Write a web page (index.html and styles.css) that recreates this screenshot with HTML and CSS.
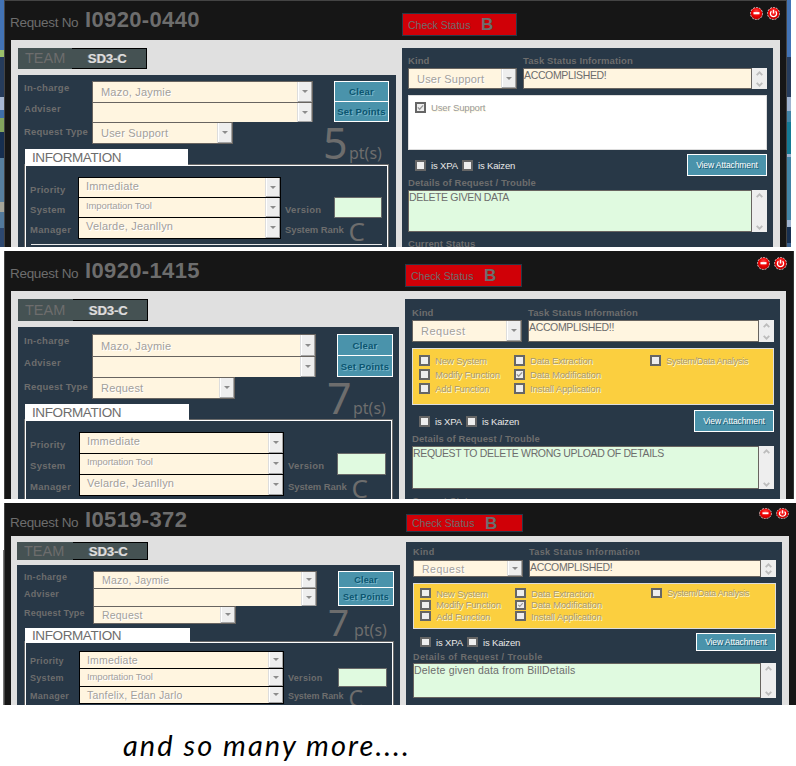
FILE: index.html
```html
<!DOCTYPE html>
<html lang="en">
<head>
<meta charset="utf-8">
<title>Request records</title>
<link rel="stylesheet" href="styles.css">
</head>
<body>
<svg class="defs" width="0" height="0" aria-hidden="true">
  <defs>
    <radialGradient id="orb" cx="50%" cy="35%" r="65%"><stop offset="0" stop-color="#ff4a4a"/><stop offset=".55" stop-color="#f00000"/><stop offset="1" stop-color="#b00000"/></radialGradient>
    <symbol id="minimize" viewBox="0 0 13 13" preserveAspectRatio="none"><circle cx="6.5" cy="6.5" r="6" fill="url(#orb)" stroke="#d8c8c8" stroke-width="1" stroke-dasharray="2 1"/><path d="M3.5 6.2h6" stroke="#fff" stroke-width="2.2"/></symbol>
    <symbol id="power" viewBox="0 0 13 13" preserveAspectRatio="none"><circle cx="6.5" cy="6.5" r="6" fill="url(#orb)" stroke="#d8c8c8" stroke-width="1" stroke-dasharray="2 1"/><path d="M4.4 4.3a3.1 3.1 0 1 0 4.2 0M6.5 2.8v3.8" stroke="#fff" stroke-width="1.3" fill="none"/></symbol>
    <symbol id="scroll-up" viewBox="0 0 7 5"><path d="M.7 4.2 3.5 1.3l2.8 2.9" stroke="#bdbdbd" stroke-width="1.8" fill="none"/></symbol>
    <symbol id="scroll-down" viewBox="0 0 7 5"><path d="M.7.8l2.8 2.9L6.3.8" stroke="#bdbdbd" stroke-width="1.8" fill="none"/></symbol>
    <symbol id="tick" viewBox="0 0 8 8"><path d="M1 3.8 3 6 7 1.5" stroke="#969696" stroke-width="1.5" fill="none"/></symbol>
  </defs>
</svg>

<section class="shot shot-a">
  <div class="edge edge-left"></div>
  <div class="window">
    <header class="head">
      <div class="request"><span class="request-label">Request No</span><span class="request-id">I0920-0440</span></div>
      <div class="status"><span>Check Status</span><b>B</b></div>
      <div class="orbs"><svg><use href="#minimize"/></svg><svg><use href="#power"/></svg></div>
    </header>
    <main class="body">
      <div class="left">
        <div class="team"><span class="team-label">TEAM</span><span class="team-name">SD3-C</span></div>
        <div class="panel">
          <div class="top">
            <div class="main-col">
              <div class="fields">
                <label>In-charge</label><div class="field"><span>Mazo, Jaymie</span><i class="drop"></i></div>
                <label>Adviser</label><div class="field"><span></span><i class="drop"></i></div>
                <label class="mid">Request Type</label><div class="field short"><span>User Support</span><i class="drop"></i></div>
              </div>
              <div class="tab">INFORMATION</div>
            </div>
            <div class="side">
              <div class="buttons"><button>Clear</button><button>Set Points</button></div>
              <div class="points"><span class="num">5</span><span class="unit">pt(s)</span></div>
            </div>
          </div>
          <div class="info">
            <div class="info-grid">
              <label>Priority</label><div class="field"><span>Immediate</span><i class="drop"></i></div><span></span><span></span>
              <label>System</label><div class="field"><span class="small">Importation Tool</span><i class="drop"></i></div><label>Version</label><div class="version"></div>
              <label>Manager</label><div class="field"><span>Velarde, Jeanllyn</span><i class="drop"></i></div><div class="rank"><label>System Rank</label><span>C</span></div>
            </div>
            <div class="rule"></div>
          </div>
        </div>
      </div>
      <div class="right">
        <div class="titles"><label>Kind</label><label>Task Status Information</label></div>
        <div class="kind-row">
          <div class="field"><span>User Support</span><i class="drop"></i></div>
          <div class="area"><p>ACCOMPLISHED!</p><div class="scroll"><svg><use href="#scroll-up"/></svg><svg><use href="#scroll-down"/></svg></div></div>
        </div>
        <div class="options plain">
          <div class="check"><i class="box"><svg><use href="#tick"/></svg></i><span>User Support</span></div>
        </div>
        <div class="flags">
          <div class="check"><i class="box"></i><span>is XPA</span></div>
          <div class="check"><i class="box"></i><span>is Kaizen</span></div>
          <button class="attach">View Attachment</button>
        </div>
        <label class="details">Details of Request / Trouble</label>
        <div class="area green"><p>DELETE GIVEN DATA</p><div class="scroll"><svg><use href="#scroll-up"/></svg><svg><use href="#scroll-down"/></svg></div></div>
        <label class="current">Current Status</label>
      </div>
    </main>
  </div>
  <div class="edge edge-right"></div>
</section>

<section class="shot shot-b">
  <div class="edge edge-left"></div>
  <div class="window">
    <header class="head">
      <div class="request"><span class="request-label">Request No</span><span class="request-id">I0920-1415</span></div>
      <div class="status"><span>Check Status</span><b>B</b></div>
      <div class="orbs"><svg><use href="#minimize"/></svg><svg><use href="#power"/></svg></div>
    </header>
    <main class="body">
      <div class="left">
        <div class="team"><span class="team-label">TEAM</span><span class="team-name">SD3-C</span></div>
        <div class="panel">
          <div class="top">
            <div class="main-col">
              <div class="fields">
                <label>In-charge</label><div class="field"><span>Mazo, Jaymie</span><i class="drop"></i></div>
                <label>Adviser</label><div class="field"><span></span><i class="drop"></i></div>
                <label class="mid">Request Type</label><div class="field short"><span>Request</span><i class="drop"></i></div>
              </div>
              <div class="tab">INFORMATION</div>
            </div>
            <div class="side">
              <div class="buttons"><button>Clear</button><button>Set Points</button></div>
              <div class="points"><span class="num">7</span><span class="unit">pt(s)</span></div>
            </div>
          </div>
          <div class="info">
            <div class="info-grid">
              <label>Priority</label><div class="field"><span>Immediate</span><i class="drop"></i></div><span></span><span></span>
              <label>System</label><div class="field"><span class="small">Importation Tool</span><i class="drop"></i></div><label>Version</label><div class="version"></div>
              <label>Manager</label><div class="field"><span>Velarde, Jeanllyn</span><i class="drop"></i></div><div class="rank"><label>System Rank</label><span>C</span></div>
            </div>
          </div>
        </div>
      </div>
      <div class="right">
        <div class="titles"><label>Kind</label><label>Task Status Information</label></div>
        <div class="kind-row">
          <div class="field"><span class="wide">Request</span><i class="drop"></i></div>
          <div class="area"><p>ACCOMPLISHED!!</p><div class="scroll"><svg><use href="#scroll-up"/></svg><svg><use href="#scroll-down"/></svg></div></div>
        </div>
        <div class="options">
          <div class="check"><i class="box"></i><span>New System</span></div>
          <div class="check"><i class="box"></i><span>Data Extraction</span></div>
          <div class="check tiny"><i class="box"></i><span>System/Data Analysis</span></div>
          <div class="check"><i class="box"></i><span>Modify Function</span></div>
          <div class="check"><i class="box"><svg><use href="#tick"/></svg></i><span>Data Modification</span></div>
          <div></div>
          <div class="check"><i class="box"></i><span>Add Function</span></div>
          <div class="check"><i class="box"></i><span>Install Application</span></div>
        </div>
        <div class="flags">
          <div class="check"><i class="box"></i><span>is XPA</span></div>
          <div class="check"><i class="box"></i><span>is Kaizen</span></div>
          <button class="attach">View Attachment</button>
        </div>
        <label class="details">Details of Request / Trouble</label>
        <div class="area green"><p>REQUEST TO DELETE WRONG UPLOAD OF DETAILS</p><div class="scroll"><svg><use href="#scroll-up"/></svg><svg><use href="#scroll-down"/></svg></div></div>
        <label class="current">Current Status</label>
      </div>
    </main>
  </div>
</section>

<section class="shot shot-c">
  <div class="edge edge-left"></div>
  <div class="window">
    <header class="head">
      <div class="request"><span class="request-label">Request No</span><span class="request-id">I0519-372</span></div>
      <div class="status"><span>Check Status</span><b>B</b></div>
      <div class="orbs"><svg><use href="#minimize"/></svg><svg><use href="#power"/></svg></div>
    </header>
    <main class="body">
      <div class="left">
        <div class="team"><span class="team-label">TEAM</span><span class="team-name">SD3-C</span></div>
        <div class="panel">
          <div class="top">
            <div class="main-col">
              <div class="fields">
                <label>In-charge</label><div class="field"><span>Mazo, Jaymie</span><i class="drop"></i></div>
                <label>Adviser</label><div class="field"><span></span><i class="drop"></i></div>
                <label class="mid">Request Type</label><div class="field short"><span>Request</span><i class="drop"></i></div>
              </div>
              <div class="tab">INFORMATION</div>
            </div>
            <div class="side">
              <div class="buttons"><button>Clear</button><button>Set Points</button></div>
              <div class="points"><span class="num">7</span><span class="unit">pt(s)</span></div>
            </div>
          </div>
          <div class="info">
            <div class="info-grid">
              <label>Priority</label><div class="field"><span>Immediate</span><i class="drop"></i></div><span></span><span></span>
              <label>System</label><div class="field"><span class="small">Importation Tool</span><i class="drop"></i></div><label>Version</label><div class="version"></div>
              <label>Manager</label><div class="field"><span>Tanfelix, Edan Jarlo</span><i class="drop"></i></div><div class="rank"><label>System Rank</label><span>C</span></div>
            </div>
          </div>
        </div>
      </div>
      <div class="right">
        <div class="titles"><label>Kind</label><label>Task Status Information</label></div>
        <div class="kind-row">
          <div class="field"><span class="wide">Request</span><i class="drop"></i></div>
          <div class="area"><p>ACCOMPLISHED!</p><div class="scroll"><svg><use href="#scroll-up"/></svg><svg><use href="#scroll-down"/></svg></div></div>
        </div>
        <div class="options">
          <div class="check"><i class="box"></i><span>New System</span></div>
          <div class="check"><i class="box"></i><span>Data Extraction</span></div>
          <div class="check tiny"><i class="box"></i><span>System/Data Analysis</span></div>
          <div class="check"><i class="box"></i><span>Modify Function</span></div>
          <div class="check"><i class="box"><svg><use href="#tick"/></svg></i><span>Data Modification</span></div>
          <div></div>
          <div class="check"><i class="box"></i><span>Add Function</span></div>
          <div class="check"><i class="box"></i><span>Install Application</span></div>
        </div>
        <div class="flags">
          <div class="check"><i class="box"></i><span>is XPA</span></div>
          <div class="check"><i class="box"></i><span>is Kaizen</span></div>
          <button class="attach">View Attachment</button>
        </div>
        <label class="details">Details of Request / Trouble</label>
        <div class="area green"><p class="mixed">Delete given data from BillDetails</p><div class="scroll"><svg><use href="#scroll-up"/></svg><svg><use href="#scroll-down"/></svg></div></div>
      </div>
    </main>
  </div>
</section>

<p class="more">and so many more....</p>
</body>
</html>
```
FILE: styles.css
```css
* { box-sizing: border-box; }
html, body { margin: 0; width: 796px; height: 766px; overflow: hidden; background: #fff; }
body { font-family: "Liberation Sans", Arial, sans-serif; font-size: 11px; color: #6d6d6d; }
p { margin: 0; }
.defs { display: block; position: absolute; }

.shot {
  --lab: 9.5px; --txt: 11px; --track: .1px; --num: 43px; --pts-gap: 3px; --pr: 6px; --req: 6px; --rank: 26px;
  display: flex; height: var(--h); margin-bottom: 4px; overflow: hidden; white-space: nowrap;
}
.shot-a {
  --h: 247px; --win: 783px; --head: 40px; --lw: 378px; --rw: 371px; --padl: 7px; --padt: 8px;
  --team: 21px; --team-l: 54px; --team-gap: 6px; --pt: 6px; --rows: 21px 20px 22px;
  --lab-w: 74px; --f: 221px; --fs: 141px; --btn-w: 55px; --tab-w: 163px; --tab-m: 5px; --tab-h: 15px;
  --ipad: 11px; --irows: 20px 20px 22px; --il: 52px; --if: 203px; --iv: 53px; --ivw: 48px; --rp: 6px;
  --title: 20px; --sel: 21px; --selw: 109px; --opt: 55px; --fgap: 4px; --flag: 22px; --det: 14px; --green: 42px;
  --st-x: 398px; --st-w: 115px; --st-y: 13px; --st-h: 23px; --orb-x: 6px; --orb-y: 6px; --orb-h: 13px; --box: 11px;
  --pr: 7px;
}
.shot-b {
  --h: 248px; --win: 790px; --head: 40px; --lw: 381px; --rw: 375px; --padl: 7px; --padt: 8px;
  --team: 22px; --team-l: 55px; --team-gap: 6px; --pt: 7px; --rows: 22px 21px 22px;
  --lab-w: 74px; --f: 224px; --fs: 143px; --btn-w: 56px; --tab-w: 164px; --tab-m: 5px; --tab-h: 15px;
  --ipad: 11px; --irows: 21px 21px 22px; --il: 53px; --if: 205px; --iv: 53px; --ivw: 49px; --rp: 7px;
  --title: 21px; --sel: 22px; --selw: 110px; --opt: 57px; --fgap: 5px; --flag: 22px; --det: 14px; --green: 43px;
  --st-x: 401px; --st-w: 117px; --st-y: 13px; --st-h: 23px; --orb-x: 6px; --orb-y: 6px; --orb-h: 13px; --box: 11px;
  --req: 7px;
}
.shot-c {
  --h: 202px; --win: 792px; --head: 33px; --lw: 383px; --rw: 376px; --padl: 6px; --padt: 6px;
  --team: 18px; --team-l: 56px; --team-gap: 5px; --pt: 6px; --rows: 17px 18px 18px;
  --lab-w: 75px; --f: 224px; --fs: 143px; --btn-w: 56px; --tab-w: 165px; --tab-m: 4px; --tab-h: 13px;
  --ipad: 8px; --irows: 17px 18px 18px; --il: 53px; --if: 205px; --iv: 54px; --ivw: 49px; --rp: 7px;
  --title: 18px; --sel: 17px; --selw: 110px; --opt: 46px; --fgap: 4px; --flag: 18px; --det: 12px; --green: 35px;
  --st-x: 402px; --st-w: 117px; --st-y: 11px; --st-h: 18px; --orb-x: 7px; --orb-y: 5px; --orb-h: 11px; --box: 10px;
  --lab: 9px; --txt: 10.5px; --track: .4px; --num: 37px; --pts-gap: 3px; --req: 4px; --rank: 23px;
}
.edge { width: 4px; flex: none; }
.shot-a .edge-left { background: linear-gradient(#4273b5 0 50px, #9bc06a 50px 57px, #263c5c 57px 97px, #a8b8d4 97px 110px, #3f6fa8 110px 118px, #84a45e 118px 132px, #172f50 132px 158px, #58809f 158px 202px, #a6a69a 202px 212px, #52799b 212px 228px, #2d4870 228px); }
.shot-a .edge-right { background: linear-gradient(#4273b5 0 57px, #263c5c 57px 97px, #9fb3cf 97px 111px, #4284a6 111px 122px, #147a94 122px 154px, #9fb3cf 154px 157px, #4284a6 157px 220px, #9fb3cf 220px 227px, #172f50 227px 243px, #3b618d 243px); }
.shot-c .edge-left { background: linear-gradient(90deg, transparent 75%, #777 75%); clip-path: inset(47px 0 0 0); }

.window { width: var(--win); flex: none; background: #161616; border-left: 1px solid #444; }
.shot-a .window { border-top: 1px solid #444; border-right: 1px solid #444; }
.shot-b .window { border-right: 1px solid #333; }

.head { height: var(--head); display: flex; align-items: flex-start; }
.shot-a .head { height: 39px; }
.shot-a .status { margin-top: 12px; }
.request { width: calc(var(--st-x) - 1px); flex: none; display: flex; align-items: baseline; padding: var(--req) 0 0 5px; line-height: 26px; }
.request-label { width: 75px; font-size: 13.5px; letter-spacing: -.3px; }
.request-id { font-size: 22px; font-weight: bold; letter-spacing: .35px; }
.status { width: var(--st-w); height: var(--st-h); margin-top: var(--st-y); flex: none; display: flex; align-items: center; padding-left: 5px; background: #d00007; border: 1px solid #283847; }
.status span { width: 73px; font-size: 10.5px; }
.status b { font-size: 17px; line-height: 1; }
.orbs { margin-left: auto; display: flex; gap: 4px; padding: var(--orb-y) var(--orb-x) 0 0; }
.orbs svg { width: 13px; height: var(--orb-h); display: block; }

.body { height: 100%; margin: 0 7px 0 6px; padding: var(--padt) 0 0 var(--padl); background: #e0e0e0; display: flex; gap: 6px; }
.shot-a .body { margin-right: 6px; }
.left { width: var(--lw); flex: none; display: flex; flex-direction: column; }
.team { display: flex; height: var(--team); margin-bottom: var(--team-gap); line-height: var(--team); flex: none; }
.team-label { width: var(--team-l); padding-left: 7px; background: #455253; font-size: 14.5px; }
.team-name { width: 75px; padding-left: 16px; background: #455253; border: 1px solid #000; border-left: 0; color: #ddd; font-size: 13px; font-weight: bold; line-height: calc(var(--team) - 1px); text-shadow: -1px 0 #8c8c8c; }
.panel { flex: 1; background: #283847; padding: var(--pt) var(--pr) 0 6px; }
.shot-c .panel { padding-left: 7px; }
.top { display: flex; justify-content: space-between; }
label { font-size: var(--lab); font-weight: bold; letter-spacing: .3px; line-height: 13px; display: block; }
.fields { display: grid; grid-template-columns: calc(var(--lab-w) - 6px) auto; grid-template-rows: var(--rows); }
.fields label.mid { align-self: center; margin-top: -3px; letter-spacing: .2px; }
.field { display: flex; width: var(--f); background: #fff5e0; border: 1px solid #686460; border-bottom-width: 0; color: #a2a09c; font-size: var(--txt); text-shadow: 1px 1px #fff; }
.field span { flex: 1; align-self: center; padding-left: 8px; letter-spacing: .2px; }
.field.short, .kind-row .field { border-bottom-width: 1px; }
.field.short { width: var(--fs); }
.drop { width: 14px; flex: none; background: #eee; border: solid #a5a5a5; border-width: 0 1px 1px 0; box-shadow: inset 1px 0 #fff, -1px 0 #ddd; display: flex; align-items: center; justify-content: center; }
.drop::before { content: ""; border: 3px solid transparent; border-top: 3px solid #8c8c8c; border-bottom: 0; }
.tab { position: relative; width: var(--tab-w); height: calc(var(--tab-h) + 1px); margin: var(--tab-m) 0 -1px 1px; padding-left: 7px; line-height: calc(var(--tab-h) + 2px); background: #fff; font-size: 13.5px; letter-spacing: -.4px; overflow: hidden; }
.side { width: 66px; display: flex; flex-direction: column; align-items: flex-end; }
.buttons { width: var(--btn-w); display: grid; grid-template-rows: var(--rows); height: calc(var(--sel) * 2); }
button { font: bold var(--lab) "Liberation Sans", Arial, sans-serif; letter-spacing: .2px; padding: 0; margin: 0; color: #0a5570; background: #4a93ab; border: 1px solid #fff; text-shadow: 1px 1px #79b6ca; white-space: nowrap; }
.buttons button + button { margin-top: -1px; }
.points { display: flex; align-items: baseline; width: 66px; height: 30px; margin-top: var(--pts-gap); line-height: 34px; font-family: "Noto Sans", sans-serif; }
.shot-c .points { line-height: 27px; height: 24px; }
.num { font-size: var(--num); width: 26px; }
.unit { font-size: 16px; }

.info { height: 200px; border: 1px solid #6a6a6a; box-shadow: inset 1px 1px #fff, inset -1px 0 #fff; padding: calc(var(--ipad) + 1px) 6px 0 1px; }
.info-grid { display: grid; grid-template-columns: var(--il) var(--if) var(--iv) var(--ivw); grid-template-rows: var(--irows); }
.info-grid label { padding: 6px 0 0 4px; }
.shot-c .info-grid label { padding-top: 4px; }
.info-grid .field { width: auto; border-color: #000; }
.info-grid .field span { align-self: flex-start; padding-left: 7px; line-height: 16px; }
.info-grid .field .small { font-size: 9.5px; letter-spacing: -.1px; }
.version { background: #e0fae0; border: 1px solid #6a6a6a; margin-bottom: -1px; }
.info-grid .field:nth-last-child(2) { border-bottom-width: 1px; }
.rank { grid-column: 3 / 5; display: flex; gap: 5px; height: 22px; }
.rank label { letter-spacing: -.1px; }
.rank span { font: var(--rank)/28px "Noto Sans", sans-serif; }
.shot-c .rank span { line-height: 25px; }
.rule { height: 1px; background: #e8e8e8; margin: 5px 0 0 5px; }

.right { width: var(--rw); flex: none; background: #283847; padding: 0 6px 0 var(--rp); }
.titles { height: var(--title); display: grid; grid-template-columns: calc(var(--selw) + 6px) auto; align-items: end; }
.titles label { letter-spacing: var(--track); padding-bottom: 1px; }
.kind-row { display: flex; gap: 6px; height: var(--sel); }
.kind-row .field { width: var(--selw); flex: none; }
.kind-row .wide { letter-spacing: .5px; }
.area { flex: 1; display: flex; background: #fff5e0; border: 1px solid #686460; border-right: 0; }
.area p { flex: 1; font-size: 10.5px; line-height: 12px; letter-spacing: -.35px; border-right: 1px solid #686460; }
.area .mixed { letter-spacing: .2px; }
.scroll { width: 15px; margin: -1px 0; flex: none; background: #eee; display: flex; flex-direction: column; align-items: center; justify-content: space-between; padding: 3px 0 2px; }
.scroll svg { width: 7px; height: 5px; }
.options { height: var(--opt); margin-top: 6px; background: #fbcf3f; border: 1px solid #ddd; padding: 6px 0 0 6px; display: grid; grid-template-columns: 95px 136px auto; grid-auto-rows: 14px; align-items: start; color: #a89a72; text-shadow: 1px 1px #fff8dc; }
.options.plain { background: #fff; color: #999; }
.shot-c .options { grid-auto-rows: 11.5px; padding-top: 4px; }
.check { display: flex; align-items: center; gap: 5px; height: var(--box); font-size: 9.5px; letter-spacing: -.15px; }
.check.tiny { font-size: 9px; letter-spacing: -.25px; }
.box { width: 11px; height: var(--box); flex: none; background: #eee; border: 2px solid #666; display: block; }
.box svg { display: block; width: 7px; height: 100%; }
.flags { height: var(--flag); margin-top: var(--fgap); display: flex; align-items: center; padding-left: 7px; color: #e8e8e8; }
.flags .check { width: 47px; }
.flags .check + .check { width: auto; }
.attach { margin-left: auto; width: 80px; height: 100%; font-size: 8.5px; font-weight: normal; letter-spacing: -.1px; color: #fff; text-shadow: 1px 1px #1d5c72; }
.details { height: var(--det); line-height: var(--det); letter-spacing: var(--track); }
.green { height: var(--green); background: #e0fae0; }
.current { margin-top: 5px; letter-spacing: var(--track); }

.more { margin: 22px 0 0 123px; font: italic 29px/36px "Lato", sans-serif; letter-spacing: 2.05px; color: #000; white-space: nowrap; }
```
